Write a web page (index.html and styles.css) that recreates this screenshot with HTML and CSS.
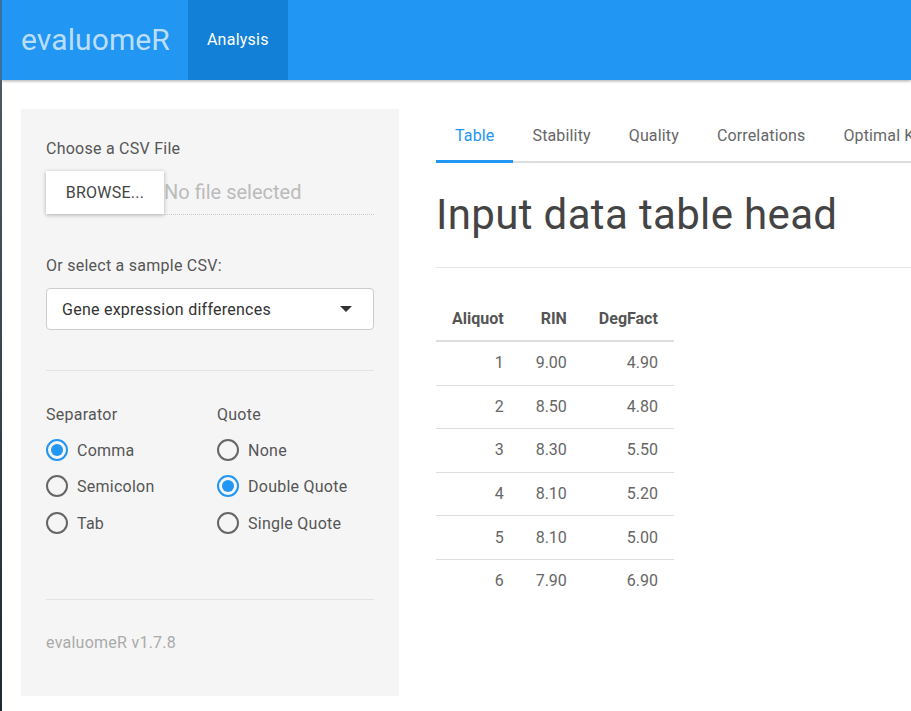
FILE: index.html
```html
<!DOCTYPE html>
<html>
<head>
<meta charset="utf-8">
<link rel="stylesheet" href="styles.css">
</head>
<body>
<div class="edge"></div>
<div class="page">
  <nav class="navbar">
    <div class="brand">evaluomeR</div>
    <div class="navtab active">Analysis</div>
  </nav>
  <div class="layout">
    <aside class="well">
      <div class="label first">Choose a CSV File</div>
      <div class="file-row">
        <div class="browse">BROWSE...</div>
        <div class="filename">No file selected</div>
      </div>
      <div class="label second">Or select a sample CSV:</div>
      <div class="select">
        <span>Gene expression differences</span>
        <span class="caret"></span>
      </div>
      <hr class="sep">
      <div class="radios">
        <div class="group">
          <div class="label">Separator</div>
          <div class="radio"><span class="dot checked"></span>Comma</div>
          <div class="radio"><span class="dot"></span>Semicolon</div>
          <div class="radio"><span class="dot"></span>Tab</div>
        </div>
        <div class="group">
          <div class="label">Quote</div>
          <div class="radio"><span class="dot"></span>None</div>
          <div class="radio"><span class="dot checked"></span>Double Quote</div>
          <div class="radio"><span class="dot"></span>Single Quote</div>
        </div>
      </div>
      <hr class="sep bottom">
      <div class="version">evaluomeR v1.7.8</div>
    </aside>
    <main class="main">
      <div class="tabs">
        <div class="tab active">Table</div>
        <div class="tab">Stability</div>
        <div class="tab">Quality</div>
        <div class="tab">Correlations</div>
        <div class="tab">Optimal K</div>
      </div>
      <h1 class="title">Input data table head</h1>
      <hr class="divider">
      <table class="data">
        <thead>
          <tr><th>Aliquot</th><th>RIN</th><th>DegFact</th></tr>
        </thead>
        <tbody>
          <tr><td>1</td><td>9.00</td><td>4.90</td></tr>
          <tr><td>2</td><td>8.50</td><td>4.80</td></tr>
          <tr><td>3</td><td>8.30</td><td>5.50</td></tr>
          <tr><td>4</td><td>8.10</td><td>5.20</td></tr>
          <tr><td>5</td><td>8.10</td><td>5.00</td></tr>
          <tr><td>6</td><td>7.90</td><td>6.90</td></tr>
        </tbody>
      </table>
    </main>
  </div>
</div>
</body>
</html>
```
FILE: styles.css
```css
html, body {
  margin: 0;
  padding: 0;
  height: 100%;
  overflow: hidden;
}
body {
  display: flex;
  font-family: Roboto, "Liberation Sans", sans-serif;
  font-size: 16px;
  letter-spacing: 0.25px;
  color: #555;
  background: #fff;
}
.edge {
  width: 2px;
  flex: none;
  background: linear-gradient(#3b6fa0 0, #3b6fa0 80px, #4d5a62 80px, #33404a 60%, #1c2a36 100%);
}
.page {
  flex: 1;
  min-width: 0;
  overflow: hidden;
}
.navbar {
  height: 80px;
  background: #2196f3;
  display: flex;
  align-items: stretch;
  box-shadow: 0 1px 3px rgba(0,0,0,0.35);
  position: relative;
}
.brand {
  padding-left: 19px;
  padding-right: 18px;
  font-size: 30px;
  letter-spacing: 0.1px;
  line-height: 80px;
  color: #bbdefb;
}
.navtab {
  padding: 0 19px;
  line-height: 80px;
  font-size: 16px;
  color: #fff;
}
.navtab.active {
  background: #1180d6;
}
.layout {
  display: flex;
  padding-top: 29px;
  padding-left: 19px;
}
.well {
  flex: none;
  width: 328px;
  height: 559px;
  background: #f5f5f5;
  padding: 28px 25px 0 25px;
}
.label {
  line-height: 24px;
  color: #555;
}
.file-row {
  display: flex;
  align-items: stretch;
  margin-top: 10px;
  height: 44px;
}
.browse {
  width: 118px;
  height: 43px;
  background: #fff;
  box-shadow: 0 1px 4px rgba(0,0,0,0.3);
  color: #444;
  font-size: 16px;
  line-height: 43px;
  text-align: center;
  flex: none;
}
.filename {
  flex: 1;
  font-size: 20px;
  letter-spacing: 0;
  color: #bbb;
  line-height: 43px;
  padding-left: 0;
  border-bottom: 1px dotted #ccc;
}
.label.second {
  margin-top: 39px;
}
.select {
  margin-top: 10px;
  height: 40px;
  border: 1px solid #ccc;
  border-radius: 4px;
  background: #fff;
  display: flex;
  align-items: center;
  justify-content: space-between;
  padding: 0 21px 0 15px;
  color: #333;
}
.caret {
  width: 0;
  height: 0;
  border-left: 6px solid transparent;
  border-right: 6px solid transparent;
  border-top: 6px solid #333;
}
.sep {
  border: 0;
  border-top: 1px solid #e3e3e3;
  margin: 40px 0 0 0;
}
.radios {
  display: flex;
  margin-top: 32px;
}
.group {
  flex: none;
  width: 171px;
}
.group + .group {
  width: auto;
}
.radio {
  display: flex;
  align-items: center;
  height: 24px;
  margin-top: 12px;
  color: #555;
}
.radio:nth-child(2) {
  margin-top: 11px;
}
.radio:nth-child(4) {
  margin-top: 13px;
}
.dot {
  width: 18px;
  height: 18px;
  border: 2px solid #666;
  border-radius: 50%;
  margin-right: 9px;
  flex: none;
  display: flex;
  align-items: center;
  justify-content: center;
}
.dot.checked {
  border-color: #2196f3;
}
.dot.checked::after {
  content: "";
  width: 12px;
  height: 12px;
  border-radius: 50%;
  background: #2196f3;
}
.sep.bottom {
  margin-top: 64px;
}
.version {
  margin-top: 31px;
  line-height: 24px;
  color: #aaa;
}
.main {
  flex: none;
  margin-left: 37px;
  width: 700px;
}
.tabs {
  display: flex;
  border-bottom: 2px solid #ddd;
  white-space: nowrap;
  letter-spacing: 0.15px;
}
.tab {
  padding: 15px 19px 13px 19px;
  line-height: 24px;
  color: #666;
  margin-bottom: -2px;
  border-bottom: 2px solid transparent;
}
.tab.active {
  color: #2196f3;
  border-bottom: 3px solid #2196f3;
  padding-bottom: 12px;
}
.title {
  font-weight: 400;
  font-size: 42px;
  line-height: 50px;
  letter-spacing: 0.35px;
  color: #444;
  margin: 27px 0 0 0;
}
.divider {
  border: 0;
  border-top: 1px solid #e5e5e5;
  margin: 27px 0 0 0;
}
.data {
  border-collapse: collapse;
  margin-top: 30px;
  color: #666;
  letter-spacing: 0;
}
.data th, .data td {
  text-align: right;
  padding: 0 16px;
  line-height: 24px;
}
.data th {
  font-weight: 700;
  color: #555;
  padding-top: 9px;
  padding-bottom: 9px;
  border-bottom: 2px solid #ddd;
}
.data td {
  height: 42.6px;
  border-bottom: 1px solid #ddd;
  padding-top: 0;
  padding-bottom: 0;
}
.data tr:last-child td {
  border-bottom: 0;
}
```
